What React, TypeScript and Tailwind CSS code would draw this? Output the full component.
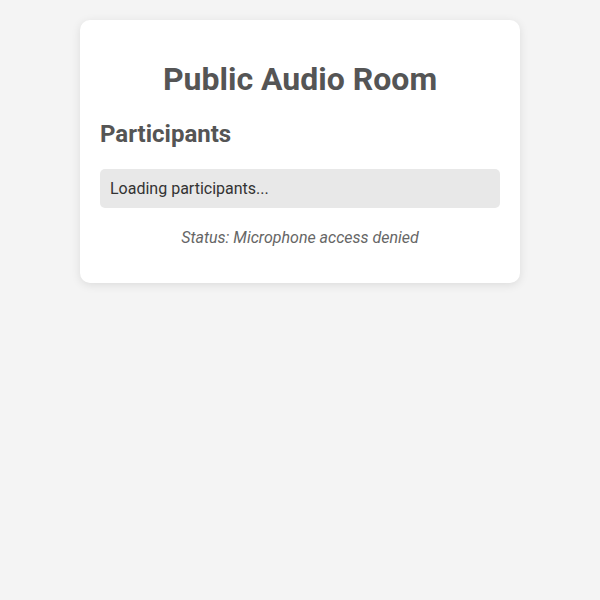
export default function App() {
  return (
    <div className="min-h-[600px] bg-[#f4f4f4] pt-5 font-['Roboto',sans-serif]">
      <div className="mx-auto w-[440px] rounded-[10px] bg-white p-5 shadow-[0_2px_10px_rgba(0,0,0,0.1)]">
        <h1 className="mt-[21px] mb-[21px] text-center text-[32px] leading-[37.5px] font-bold text-[#555]">
          Public Audio Room
        </h1>
        <h2 className="mb-[21px] text-[24px] leading-[28px] font-bold text-[#555]">
          Participants
        </h2>
        <div className="mb-5 rounded-[5px] bg-[#e8e8e8] px-[10px] py-[10px] text-base leading-[19px] text-[#333]">
          Loading participants...
        </div>
        <p className="mb-4 text-center text-base leading-[19px] text-[#666] italic">
          Status: Microphone access denied
        </p>
      </div>
    </div>
  );
}
